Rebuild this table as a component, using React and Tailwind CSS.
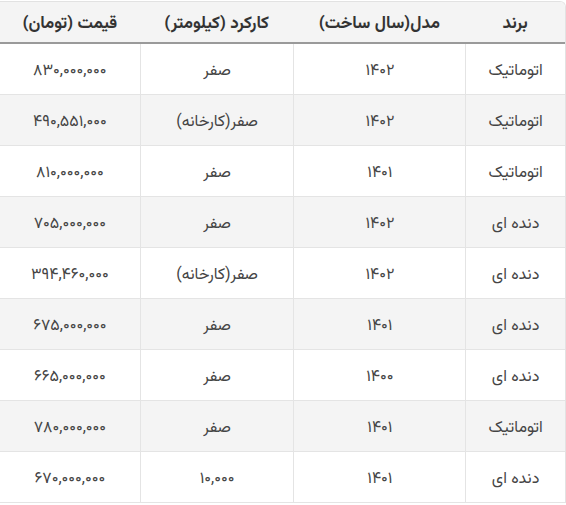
import React from "react";

const rows = [
  ["اتوماتیک", "۱۴۰۲", "صفر", "۸۳۰,۰۰۰,۰۰۰"],
  ["اتوماتیک", "۱۴۰۲", "صفر(کارخانه)", "۴۹۰,۵۵۱,۰۰۰"],
  ["اتوماتیک", "۱۴۰۱", "صفر", "۸۱۰,۰۰۰,۰۰۰"],
  ["دنده ای", "۱۴۰۲", "صفر", "۷۰۵,۰۰۰,۰۰۰"],
  ["دنده ای", "۱۴۰۲", "صفر(کارخانه)", "۳۹۴,۴۶۰,۰۰۰"],
  ["دنده ای", "۱۴۰۱", "صفر", "۶۷۵,۰۰۰,۰۰۰"],
  ["دنده ای", "۱۴۰۰", "صفر", "۶۶۵,۰۰۰,۰۰۰"],
  ["اتوماتیک", "۱۴۰۱", "صفر", "۷۸۰,۰۰۰,۰۰۰"],
  ["دنده ای", "۱۴۰۱", "۱۰,۰۰۰", "۶۷۰,۰۰۰,۰۰۰"],
];

const headers = ["برند", "مدل(سال ساخت)", "کارکرد (کیلومتر)", "قیمت (تومان)"];
const widths = ["w-[100px]", "w-[172px]", "w-[154px]", "w-[140px]"];

export default function App() {
  return (
    <div
      dir="rtl"
      className="w-[566px] h-[505px] bg-white overflow-hidden"
      style={{ fontFamily: "'Vazirmatn', 'Vazir', 'DejaVu Sans', sans-serif" }}
    >
      <div className="mt-[1px] w-[566px] border-t border-r border-[#e2e2e2] rounded-tr-[6px] overflow-hidden">
        <div className="flex h-[42px] bg-[#f4f4f4] border-b-2 border-[#9a9a9a]">
          {headers.map((h, i) => (
            <div
              key={i}
              className={`${widths[i]} flex items-center justify-center pt-[5px] text-[17px] font-bold text-[#333]`}
            >
              {h}
            </div>
          ))}
        </div>
        {rows.map((r, ri) => (
          <div
            key={ri}
            className={`flex h-[51px] border-b border-[#e4e4e4] ${ri % 2 === 1 ? "bg-[#f4f4f4]" : "bg-white"}`}
          >
            {r.map((c, ci) => (
              <div
                key={ci}
                className={`${widths[ci]} flex items-center justify-center pt-[5px] text-[16px] text-[#444] ${ci < 3 ? "border-l border-[#e4e4e4]" : ""}`}
              >
                {c}
              </div>
            ))}
          </div>
        ))}
      </div>
    </div>
  );
}
